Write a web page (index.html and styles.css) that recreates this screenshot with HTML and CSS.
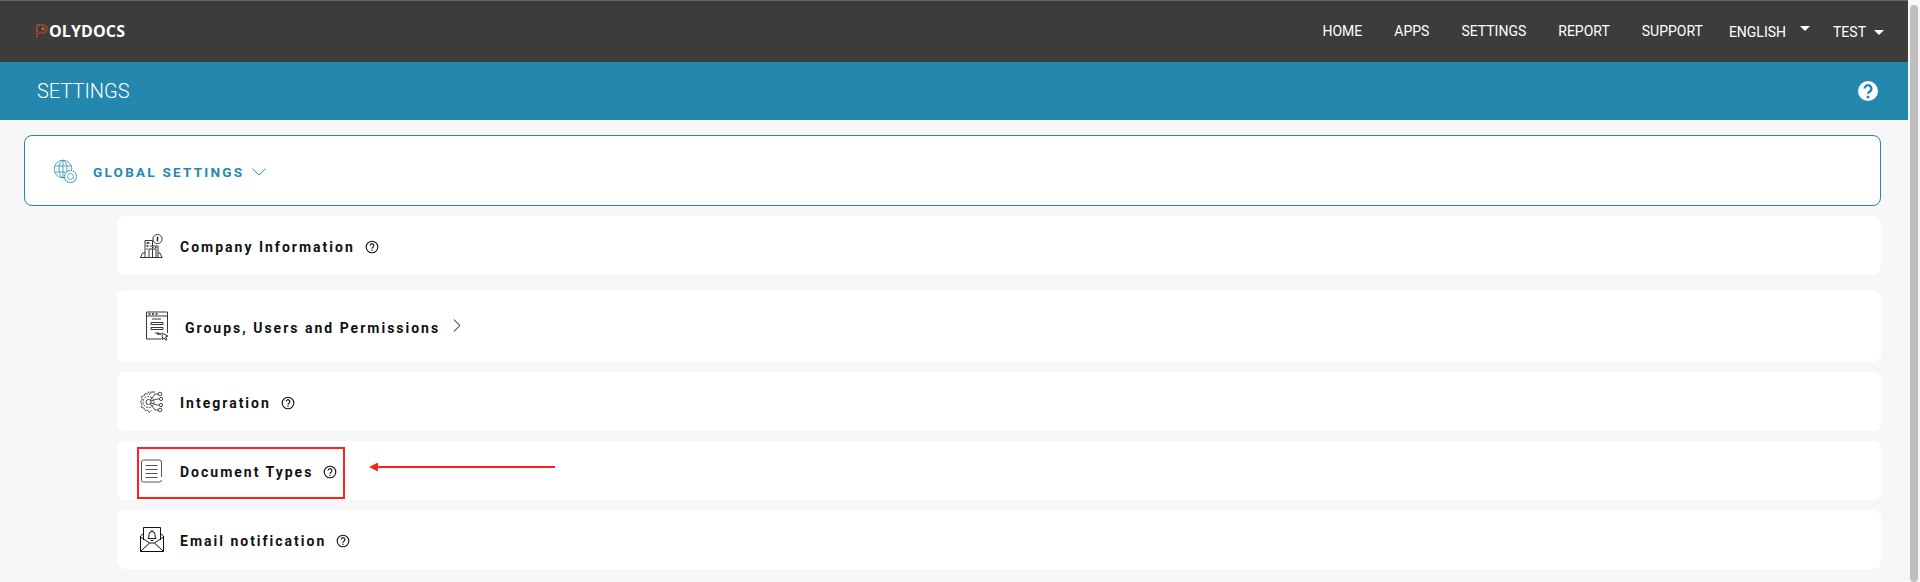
FILE: index.html
```html
<!DOCTYPE html>
<html lang="en">
<head>
  <meta charset="UTF-8">
  <meta name="viewport" content="width=device-width, initial-scale=1.0">
  <title>Settings</title>
  <link rel="stylesheet" href="styles.css">
</head>
<body>
  <svg class="defs" width="0" height="0">
    <symbol id="help" viewBox="0 0 14 14">
      <circle cx="7" cy="7" r="5.800" fill="none" stroke="#111" stroke-width="1.100"/>
      <path d="M5.100 5.600a1.900 1.900 0 1 1 2.900 1.600c-.7.400-1 .8-1 1.500" fill="none" stroke="#111" stroke-width="1.100"/>
      <circle cx="7" cy="10.300" r="0.700" fill="#111"/>
    </symbol>
  </svg>

  <div class="page">
    <div class="main">
      <header class="topbar">
        <div class="logo">
          <svg class="logo-mark" width="12" height="14" viewBox="0 0 12 14">
            <path d="M1 13.500V1h6a3.800 3.800 0 0 1 0 7.800H3" fill="none" stroke="#a8482a" stroke-width="2" stroke-dasharray="2 .7"/>
            <circle cx="7" cy="4.800" r="1.500" fill="#c0702c"/>
          </svg>
          <span>OLYDOCS</span>
        </div>
        <nav class="nav">
          <a class="nav-link">HOME</a>
          <a class="nav-link">APPS</a>
          <a class="nav-link">SETTINGS</a>
          <a class="nav-link">REPORT</a>
          <a class="nav-link">SUPPORT</a>
          <a class="nav-drop nav-lang">ENGLISH <i class="caret caret-high"></i></a>
          <a class="nav-drop nav-user">TEST <i class="caret"></i></a>
        </nav>
      </header>

      <div class="titlebar">
        <h1>SETTINGS</h1>
        <svg class="title-help" width="20" height="20" viewBox="0 0 20 20">
          <circle cx="10" cy="10" r="10" fill="#fff"/>
          <path d="M6.600 7.600a3.400 3.400 0 1 1 5.300 2.800c-1.200.8-1.900 1.300-1.900 2.400" fill="none" stroke="#2488ae" stroke-width="2.400"/>
          <circle cx="10" cy="16" r="1.500" fill="#2488ae"/>
        </svg>
      </div>

      <section class="global-card">
        <svg class="global-icon" width="24" height="24" viewBox="0 0 24 24" fill="none" stroke="#2f8fb4" stroke-width="0.8">
          <circle cx="10" cy="10" r="8.800"/>
          <ellipse cx="10" cy="10" rx="4" ry="8.800"/>
          <path d="M10 1v18M1.500 7h17M1.500 13h11"/>
          <circle cx="17.500" cy="17.500" r="6" fill="#fff" stroke-dasharray="1.600 .7" stroke-width="1.200"/>
          <circle cx="17.500" cy="17.500" r="3"/>
        </svg>
        <span class="global-label">GLOBAL SETTINGS</span>
        <svg class="global-chevron" width="14" height="8" viewBox="0 0 14 8"><path d="M.5.8 7 7 13.500.8" fill="none" stroke="#2488ae"/></svg>
      </section>

      <div class="rows">
        <div class="row">
          <svg class="row-icon" width="23" height="24" viewBox="0 0 23 24" fill="none" stroke="#222" stroke-width="0.9">
            <path d="M0 23.500h22.500M.5 23.500l2-4.500h2.500M22 23.500l-2-4.500h-2"/>
            <path d="M5 23.500V6.500h7.500V12"/>
            <path d="M9 23.500V15h7v8.500M12.500 15v8.500"/>
            <path d="M10 12h8v11.500"/>
            <path d="M6.500 9h3M6.500 12h2M6.500 15h1" stroke-width="1.300"/>
            <path d="M12 13.500h1.500M15 13.500h1.500" stroke-width="1.300"/>
            <circle cx="17.500" cy="5" r="4.600"/>
            <path d="M17.500 2.600v4.800" stroke-width="1.500"/>
          </svg>
          <span class="row-label">Company Information</span>
          <svg class="help"><use href="#help"/></svg>
        </div>

        <div class="row row-tall">
          <svg class="row-icon" width="23" height="30" viewBox="0 0 23 30" fill="none" stroke="#222" stroke-width="0.9">
            <path d="M21.500 22V1H.5v27h15"/>
            <path d="M.5 5h21"/>
            <path d="M2.500 3h2M6 3h2M9.500 3h2" stroke-width="1.400"/>
            <path d="M6 8h9M5 11.500h12v2H5zM5 16.500h12v2H5zM9 22h4"/>
            <path d="M11 23h4" stroke-width="1.400"/>
            <path d="M16 22l6 3-2.500 1 1.500 2.500-1.300.8-1.500-2.400-1.700 1.600z" fill="#fff"/>
          </svg>
          <span class="row-label">Groups, Users and Permissions</span>
          <svg class="row-chevron" width="8" height="13" viewBox="0 0 8 13"><path d="M.8.5 7 6.500.8 12.500" fill="none" stroke="#111"/></svg>
        </div>

        <div class="row">
          <svg class="row-icon" width="23" height="24" viewBox="0 0 23 24" fill="none" stroke="#333" stroke-width="0.9">
            <path d="M9 1.500 7.500 4 5 3.500 4 6 1.500 6.500 2 9.500 0.500 12l1.500 2.500-.5 3L4 18l1 2.500 2.500-.5L9 22.500l2.500-2" stroke-dasharray="2.500 .5"/>
            <circle cx="8.500" cy="12" r="2.500"/>
            <circle cx="8.500" cy="12" r="5.500" stroke-dasharray="2 1"/>
            <path d="M10.500 10l4.500-6h3M11 11l6-2h2M11 13l6 2h2M10.500 14l4.500 6h3M9 5l2-3h4"/>
            <circle cx="20" cy="4" r="1.800"/>
            <circle cx="21" cy="9" r="1.600"/>
            <circle cx="21" cy="15" r="1.600"/>
            <circle cx="20" cy="20" r="1.800"/>
          </svg>
          <span class="row-label">Integration</span>
          <svg class="help"><use href="#help"/></svg>
        </div>

        <div class="row">
          <svg class="row-icon" width="23" height="24" viewBox="0 0 23 24" fill="none" stroke="#555">
            <path d="M21.500 18V3a2 2 0 0 0-2-2H3.500a2 2 0 0 0-2 2v18a2 2 0 0 0 2 2h16a2 2 0 0 0 2-2"/>
            <path d="M5.500 6.500h12M5.500 10.500h12M5.500 14.500h12M5.500 18.500h12" stroke-width="1.100"/>
          </svg>
          <span class="row-label">Document Types</span>
          <svg class="help"><use href="#help"/></svg>
        </div>

        <div class="row">
          <svg class="row-icon row-icon-wide" width="24" height="25" viewBox="0 0 24 25" fill="none" stroke="#111" stroke-width="1">
            <path d="M.5 9v15.500h23V9l-3-2.500M.5 9l3-2.500M.5 24.500l9-8.500h5l9 8.500M.5 10l9 6M23.500 10l-9 6"/>
            <path d="M3.500 13V.5H20.500V13"/>
            <path d="M8 11.500c1-1 1-2 1-4a3 3 0 0 1 6 0c0 2 0 3 1 4zM10.500 13.500h3M12 3v1.500"/>
          </svg>
          <span class="row-label">Email notification</span>
          <svg class="help"><use href="#help"/></svg>
        </div>

        <div class="callout-box"></div>
        <svg class="callout-arrow" width="186" height="10" viewBox="0 0 186 10">
          <path d="M0 5 9 0.500V4H186V6H9V9.500z" fill="#ff2020"/>
        </svg>
      </div>
    </div>

    <div class="scrollbar"><div class="scroll-thumb"></div></div>
  </div>
</body>
</html>
```

FILE: styles.css
```css
html, body {
  margin: 0;
  padding: 0;
  height: 582px;
  overflow: hidden;
}

body {
  font-family: Roboto, 'Liberation Sans', sans-serif;
  background-color: #f7f7f7;
  color: #111;
}

.defs {
  display: block;
  height: 0;
}

.page {
  display: flex;
  height: 582px;
}

.main {
  flex: 1;
  min-width: 0;
}

/* top bar */
.topbar {
  height: 62px;
  box-sizing: border-box;
  border-top: 1px solid #666;
  background-color: #3c3c3c;
  color: #fff;
  display: flex;
  align-items: center;
  justify-content: space-between;
  padding: 0 24px 1px 36px;
}

.logo {
  display: flex;
  align-items: center;
  font-family: 'Open Sans', sans-serif;
  font-weight: 700;
  font-size: 16px;
  letter-spacing: 0.1px;
}

.logo-mark {
  margin-right: 1px;
}

.nav {
  display: flex;
  align-items: center;
  font-size: 14px;
}

.nav-link {
  margin-right: 32px;
}

.nav-link:nth-child(5) {
  margin-right: 26px;
}

.nav-drop {
  display: flex;
  align-items: center;
  margin-top: 2px;
}

.nav-lang {
  margin-right: 23px;
}

.caret {
  display: block;
  width: 0;
  height: 0;
  border-left: 5px solid transparent;
  border-right: 5px solid transparent;
  border-top: 5px solid #fff;
  margin-left: 8px;
}

.caret-high {
  margin-left: 14px;
  margin-top: -7px;
}

/* title bar */
.titlebar {
  height: 58px;
  background-color: #2488ae;
  color: #fff;
  display: flex;
  align-items: center;
  justify-content: space-between;
  padding: 0 30px 0 37px;
}

.titlebar h1 {
  margin: 0;
  font-size: 20px;
  font-weight: 300;
}

/* cards */
.global-card {
  height: 71px;
  box-sizing: border-box;
  margin: 15px 27px 0 24px;
  background-color: #fff;
  border: 1px solid #2488ae;
  border-radius: 8px;
  display: flex;
  align-items: center;
  padding-left: 28px;
}

.global-label {
  margin-left: 16px;
  padding-top: 2px;
  color: #2488ae;
  font-size: 13.5px;
  font-weight: 700;
  letter-spacing: 2.25px;
}

.global-chevron {
  margin-left: 8px;
  margin-top: 2px;
}

.rows {
  position: relative;
  margin: 10px 27px 0 117px;
}

.row {
  height: 59px;
  box-sizing: border-box;
  margin-bottom: 10px;
  background-color: #fff;
  border-radius: 8px;
  display: flex;
  align-items: center;
  padding-left: 23px;
}

.row-tall {
  height: 72px;
  margin-top: 15px;
  padding-left: 29px;
}

.row-icon {
  flex: none;
  margin-right: 17px;
}

.row-icon-wide {
  margin-right: 16px;
}

.row-label {
  font-size: 14px;
  font-weight: 700;
  letter-spacing: 2px;
  padding-top: 3px;
}

.row-tall .row-icon {
  margin-right: 16px;
}

.help {
  width: 14px;
  height: 14px;
  margin-left: 10px;
  margin-top: 3px;
}

.row-chevron {
  margin-left: 13px;
  margin-bottom: 2px;
}

/* red annotation over the Document Types row */
.callout-box {
  position: absolute;
  left: 20px;
  top: 231px;
  width: 208px;
  height: 52px;
  box-sizing: border-box;
  border: 2px solid #ff2020;
}

.callout-arrow {
  position: absolute;
  left: 252px;
  top: 246px;
}

/* scrollbar */
.scrollbar {
  width: 12px;
  flex: none;
  background-color: #f7f7f7;
  padding: 5px 2px 0;
  box-sizing: border-box;
}

.scroll-thumb {
  height: 100%;
  background-color: #bfbfbf;
  border-radius: 4px;
}
```
